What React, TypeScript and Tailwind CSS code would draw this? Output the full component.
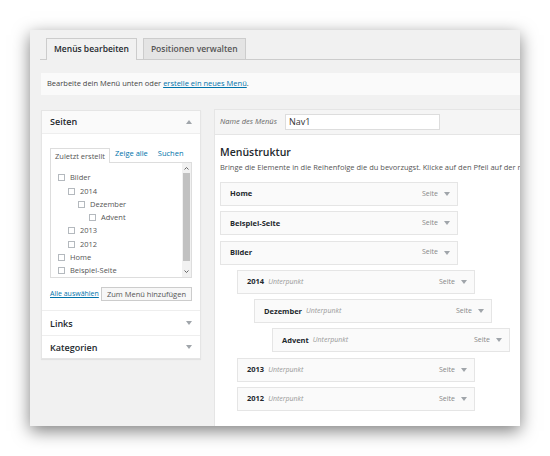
import React from 'react';

type Item = { label: string; depth: number; sub?: boolean };

const pages: { label: string; depth: number }[] = [
  { label: 'Bilder', depth: 0 },
  { label: '2014', depth: 1 },
  { label: 'Dezember', depth: 2 },
  { label: 'Advent', depth: 3 },
  { label: '2013', depth: 1 },
  { label: '2012', depth: 1 },
  { label: 'Home', depth: 0 },
  { label: 'Beispiel-Seite', depth: 0 },
];

const menuItems: Item[] = [
  { label: 'Home', depth: 0 },
  { label: 'Beispiel-Seite', depth: 0 },
  { label: 'Bilder', depth: 0 },
  { label: '2014', depth: 1, sub: true },
  { label: 'Dezember', depth: 2, sub: true },
  { label: 'Advent', depth: 3, sub: true },
  { label: '2013', depth: 1, sub: true },
  { label: '2012', depth: 1, sub: true },
];

const pageIndent = ['ml-0', 'ml-[10px]', 'ml-[20px]', 'ml-[31px]'];
const menuIndent = ['ml-0', 'ml-[17px]', 'ml-[34px]', 'ml-[52px]'];

function Arrow({ up = false }: { up?: boolean }) {
  return (
    <svg width="6" height="4" viewBox="0 0 6 4" className="text-[#a0a5aa]">
      <path d={up ? 'M0 4 L3 0 L6 4 Z' : 'M0 0 L6 0 L3 4 Z'} fill="currentColor" />
    </svg>
  );
}

export default function App() {
  return (
    <div className="min-h-[456px] bg-white pt-[30px] pl-[30px]" style={{ fontFamily: '"Open Sans", sans-serif' }}>
      <div className="w-[490px] h-[396px] overflow-hidden bg-[#f1f1f1] flex flex-col shadow-[0_5px_16px_rgba(0,0,0,0.5)]">
        {/* Tabs */}
        <div className="ml-[10px] mt-[8px] h-[22px] flex items-end gap-[6px] pl-[6px] border-b border-[#cccccc] shrink-0">
          <div className="h-[22px] -mb-px px-[7px] flex items-center bg-[#f1f1f1] border border-b-0 border-[#cccccc] text-[8.5px] font-semibold text-[#23282d]">
            Menüs bearbeiten
          </div>
          <div className="h-[21px] px-[7px] flex items-center bg-[#e4e4e4] border border-b-0 border-[#cccccc] text-[8.5px] font-semibold text-[#555]">
            Positionen verwalten
          </div>
        </div>

        {/* Notice */}
        <div className="mt-[13px] ml-[11px] w-[560px] h-[22px] shrink-0 bg-[#fafafa] flex items-center pl-[6px] text-[7.5px] text-[#444]">
          Bearbeite dein Menü unten oder&nbsp;
          <span className="text-[#0073aa] underline">erstelle ein neues Menü</span>.
        </div>

        {/* Main */}
        <div className="flex-1 flex items-start gap-[13px] ml-[11px] mt-[14px]">
          {/* Left column */}
          <div className="w-[160px] shrink-0 mt-px bg-white shadow-[0_1px_1px_rgba(0,0,0,0.06)] border border-[#e5e5e5]">
            <div className="h-[23px] flex items-center justify-between px-[8px] border-b border-[#eeeeee] bg-[#fafafa]">
              <span className="text-[9px] font-semibold text-[#23282d]">Seiten</span>
              <Arrow up />
            </div>
            <div className="px-[8px] pt-[14px] pb-[9px]">
              <div className="flex items-end text-[7.5px]">
                <div className="h-[15px] px-[4px] flex items-center border border-b-0 border-[#dddddd] bg-white text-[#555] relative -mb-px z-10">
                  Zuletzt erstellt
                </div>
                <span className="ml-[5px] mb-[3px] text-[#0073aa]">Zeige alle</span>
                <span className="ml-[10px] mb-[3px] text-[#0073aa]">Suchen</span>
              </div>
              <div className="h-[116px] border border-[#dddddd] flex">
                <div className="flex-1 pl-[7px] pt-[8px] flex flex-col">
                  {pages.map((p) => (
                    <div key={p.label} className={`h-[13.6px] flex items-center gap-[5px] ${pageIndent[p.depth]}`}>
                      <span className="w-[7px] h-[7px] border border-[#b4b9be] bg-white shrink-0" />
                      <span className="text-[7.5px] text-[#555]">{p.label}</span>
                    </div>
                  ))}
                </div>
                <div className="w-[9px] bg-[#f1f1f1] flex flex-col items-center py-[2px]">
                  <svg width="5" height="3" viewBox="0 0 5 3" className="mt-[2px]">
                    <path d="M0.5 2.5 L2.5 0.5 L4.5 2.5" stroke="#555" strokeWidth="0.9" fill="none" />
                  </svg>
                  <div className="w-[7px] h-[88px] bg-[#c1c1c1] mt-[3px]" />
                  <div className="flex-1" />
                  <svg width="5" height="3" viewBox="0 0 5 3" className="mb-[2px]">
                    <path d="M0.5 0.5 L2.5 2.5 L4.5 0.5" stroke="#555" strokeWidth="0.9" fill="none" />
                  </svg>
                </div>
              </div>
              <div className="mt-[9px] flex items-center justify-between whitespace-nowrap">
                <span className="text-[7px] text-[#0073aa] underline">Alle auswählen</span>
                <div className="h-[14px] px-[5px] flex items-center border border-[#cccccc] bg-[#f7f7f7] text-[7.5px] text-[#555]">
                  Zum Menü hinzufügen
                </div>
              </div>
            </div>
            <div className="h-[25px] flex items-center justify-between px-[8px] border-t border-[#eeeeee]">
              <span className="text-[9px] font-semibold text-[#23282d]">Links</span>
              <Arrow />
            </div>
            <div className="h-[23px] flex items-center justify-between px-[8px] border-t border-[#eeeeee]">
              <span className="text-[9px] font-semibold text-[#23282d]">Kategorien</span>
              <Arrow />
            </div>
          </div>

          {/* Right column */}
          <div className="w-[400px] shrink-0 self-stretch bg-white border-l border-t border-[#e5e5e5]">
            <div className="h-[25px] bg-[#f5f5f5] border-b border-[#e5e5e5] flex items-center pl-[5px]">
              <span className="text-[7.5px] italic text-[#666]">Name des Menüs</span>
              <div className="ml-[8px] w-[155px] h-[16px] bg-white border border-[#dddddd] flex items-center pl-[3px] text-[9px] text-[#333]">
                Nav1
              </div>
            </div>
            <div className="pl-[5px] pt-[10px]">
              <div className="text-[10.5px] font-semibold text-[#23282d] leading-[14px]">Menüstruktur</div>
              <div className="mt-[2px] text-[7.5px] text-[#555] whitespace-nowrap leading-[12px]">
                Bringe die Elemente in die Reihenfolge die du bevorzugst. Klicke auf den Pfeil auf der rechten Seite
              </div>
              <div className="mt-[9px] flex flex-col gap-[5.3px]">
                {menuItems.map((m) => (
                  <div
                    key={m.label}
                    className={`w-[238px] h-[24px] bg-[#fafafa] border border-[#e5e5e5] flex items-center pl-[9px] pr-[7px] ${menuIndent[m.depth]}`}
                  >
                    <span className="text-[7.5px] font-bold text-[#23282d]">{m.label}</span>
                    {m.sub && <span className="ml-[4px] text-[7px] italic text-[#999]">Unterpunkt</span>}
                    <span className="ml-auto text-[7px] text-[#888]">Seite</span>
                    <span className="ml-[6px]">
                      <Arrow />
                    </span>
                  </div>
                ))}
              </div>
            </div>
          </div>
        </div>
      </div>
    </div>
  );
}
